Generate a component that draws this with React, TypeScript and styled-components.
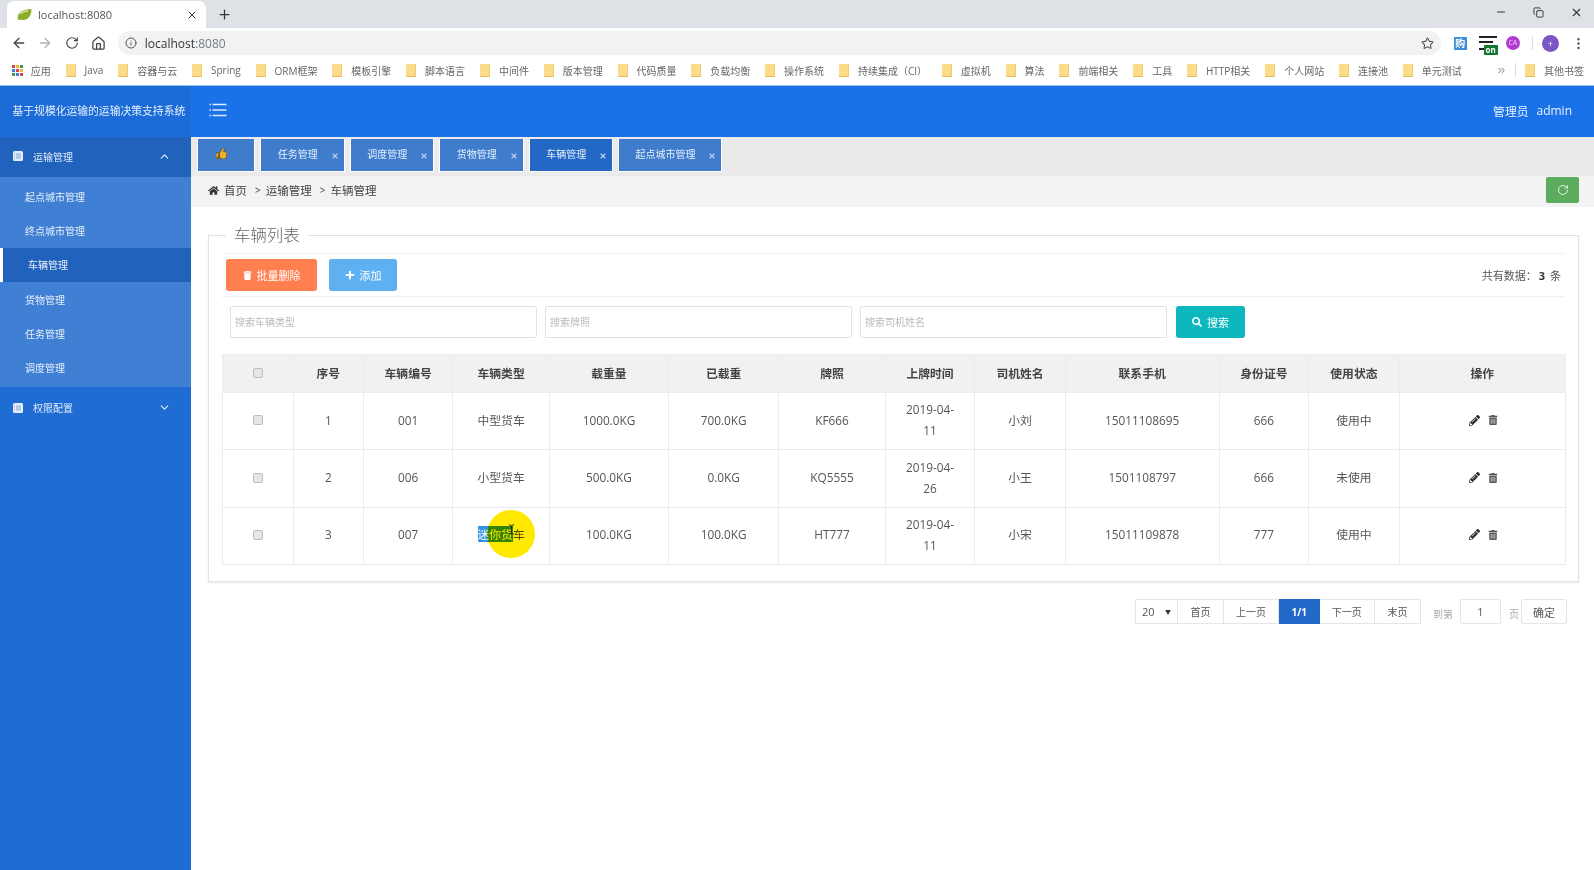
import React from 'react';
import styled, { createGlobalStyle } from 'styled-components';
import {
  ArrowLeft,
  ArrowRight,
  ChevronDown,
  ChevronUp,
  ChevronsRight,
  Copy,
  House,
  Info,
  Minus,
  MoreVertical,
  Plus,
  RotateCw,
  Star,
  TextCursor,
  X,
} from 'lucide-react';
import { FaHome, FaPencilAlt, FaPlus, FaSearch, FaThumbsUp, FaTrash, FaTrashAlt } from 'react-icons/fa';

const FONT = '"Open Sans", "Noto Sans CJK SC", sans-serif';

const GlobalStyle = createGlobalStyle`
  html, body {
    margin: 0;
    height: 100%;
    overflow: hidden;
    background: #fff;
  }
  body {
    font-family: ${FONT};
    color: #444;
  }
  * {
    box-sizing: border-box;
  }
`;

const Page = styled.div`
  width: 1594px;
  height: 870px;
  display: flex;
  flex-direction: column;
  overflow: hidden;
`;

/* browser chrome */
const TabStrip = styled.div`
  height: 28px;
  background: #dee1e6;
  display: flex;
  align-items: flex-end;
  padding-left: 7px;
  flex-shrink: 0;
`;

const BrowserTab = styled.div`
  width: 199px;
  height: 27px;
  background: #fff;
  border-radius: 7px 7px 0 0;
  display: flex;
  align-items: center;
  padding: 0 8px 0 10px;
  font-size: 11px;
  color: #555;
  gap: 6px;

  span {
    flex: 1;
  }
`;

const NewTab = styled.div`
  width: 36px;
  height: 27px;
  display: flex;
  align-items: center;
  justify-content: center;
  color: #333;
`;

const WindowButtons = styled.div`
  margin-left: auto;
  display: flex;
  align-self: flex-start;
  height: 24px;
  align-items: center;
  color: #333;
  padding-right: 11px;
  gap: 26px;
`;

const Toolbar = styled.div`
  height: 30px;
  background: #fff;
  display: flex;
  align-items: center;
  padding: 0 7px 0 5px;
  flex-shrink: 0;
`;

const NavButton = styled.div<{ $faded?: boolean }>`
  width: 27px;
  display: flex;
  justify-content: center;
  color: ${(props) => (props.$faded ? '#aeb1b5' : '#444')};
  margin-right: -0.3px;
`;

const Omnibox = styled.div`
  margin-left: 6px;
  width: 1323px;
  height: 24px;
  background: #f0f2f4;
  border-radius: 12px;
  display: flex;
  align-items: center;
  padding: 0 7px;
  font-size: 12px;
  color: #333;
  gap: 8px;

  i {
    font-style: normal;
    color: #7a7d80;
  }
  svg:last-child {
    margin-left: auto;
  }
`;

const Extensions = styled.div`
  display: flex;
  align-items: center;
  margin-left: 13px;
`;

const GouIcon = styled.div`
  width: 13px;
  height: 13px;
  background: #3a8fd8;
  color: #fff;
  font-size: 10px;
  line-height: 13px;
  text-align: center;
  font-weight: 700;
`;

const ListIcon = styled.div`
  position: relative;
  width: 18px;
  height: 14px;
  margin-left: 12px;
  border-top: 2px solid #222;
  &::before {
    content: '';
    position: absolute;
    left: 0;
    right: 4px;
    top: 3px;
    height: 5px;
    border-top: 2px solid #222;
    border-bottom: 2px solid #222;
  }
`;

const OnBadge = styled.b`
  position: absolute;
  right: -1px;
  bottom: -5px;
  background: #14772f;
  color: #fff;
  font-size: 8px;
  line-height: 10px;
  padding: 0 2px;
  border-radius: 1px;
`;

const CaIcon = styled.div`
  width: 14px;
  height: 14px;
  border-radius: 50%;
  background: #b23cd0;
  color: #f3c6ff;
  font-size: 7px;
  line-height: 14px;
  text-align: center;
  margin-left: 9px;
`;

const ToolbarRule = styled.div`
  width: 1px;
  height: 14px;
  background: #dadce0;
  margin: 0 9px 0 12px;
`;

const Avatar = styled.div`
  width: 17px;
  height: 17px;
  border-radius: 50%;
  background: #7a57c4;
  color: #fff;
  font-size: 9px;
  line-height: 17px;
  text-align: center;
`;

const MenuDots = styled.div`
  margin-left: 12px;
  display: flex;
  color: #555;
`;

const Bookmarks = styled.div`
  height: 28px;
  background: #fff;
  border-bottom: 1px solid #9cc0ee;
  display: flex;
  align-items: center;
  padding: 0 10px 3px 12px;
  font-size: 10px;
  color: #666;
  gap: 14.8px;
  flex-shrink: 0;
`;

const AppsGrid = styled.div`
  width: 11px;
  height: 11px;
  display: grid;
  grid-template-columns: repeat(3, 3px);
  grid-auto-rows: 3px;
  gap: 1px;
  margin-right: -7px;
`;

const AppsDot = styled.i<{ $color: string }>`
  background: ${(props) => props.$color};
`;

const Bookmark = styled.div`
  display: flex;
  align-items: center;
  gap: 9px;
  white-space: nowrap;
`;

const Folder = styled.i`
  width: 10px;
  height: 13px;
  background: #fcdc88;
  border-bottom: 1px solid #e3bd5d;
  border-right: 1px solid #f0cd73;
`;

const MoreBookmarks = styled.div`
  margin-left: auto;
  display: flex;
  align-items: center;
  color: #666;
  border-right: 1px solid #ddd;
  padding-right: 8px;
  height: 14px;
  margin-right: -6px;
`;

/* application */
const Body = styled.div`
  flex: 1;
  display: flex;
  min-height: 0;
`;

const Sidebar = styled.aside`
  width: 191px;
  background: #1f6dd3;
  color: #fff;
  flex-shrink: 0;
`;

const Brand = styled.div`
  height: 51px;
  background: #1b6cd8;
  display: flex;
  align-items: center;
  padding: 0 0 3px 12.5px;
  font-size: 10.8px;
  color: #e4eefb;
  white-space: nowrap;
`;

const MenuGroup = styled.div<{ $open?: boolean }>`
  height: 40px;
  background: ${(props) => (props.$open ? '#2162bd' : 'transparent')};
  display: flex;
  align-items: center;
  padding: ${(props) => (props.$open ? '0 20px 2px 13px' : '2px 20px 0 13px')};
  font-size: 10px;
  color: #dfeafa;
  gap: 10px;

  svg:last-child {
    margin-left: auto;
  }
`;

const SubMenu = styled.div`
  background: #3f7fd4;
  padding: 2.4px 0;
`;

const SubItem = styled.div<{ $active?: boolean }>`
  height: 34.2px;
  display: flex;
  align-items: center;
  font-size: 10px;
  color: #e8f0fb;
  padding-left: 25px;
  background: ${(props) => (props.$active ? '#2162bd' : 'transparent')};
  border-left: ${(props) => (props.$active ? '3px solid #fff' : '0 none')};
`;

const Main = styled.main`
  flex: 1;
  min-width: 0;
  display: flex;
  flex-direction: column;
`;

const Header = styled.header`
  height: 51px;
  background: #1b72e8;
  display: flex;
  align-items: center;
  justify-content: space-between;
  padding: 0 22px 3px 18px;
  color: #e8f2ff;
  font-size: 11.8px;
  flex-shrink: 0;

  div {
    display: flex;
    gap: 8px;
  }
  b {
    font-weight: 400;
    font-size: 12px;
  }
`;

const Hamburger = styled.svg`
  width: 18px;
  height: 14px;
  display: block;
`;

const TabBar = styled.div`
  height: 39px;
  background: #ebebeb;
  display: flex;
  gap: 5px;
  padding: 2px 0 0 6px;
  flex-shrink: 0;
`;

const PageTab = styled.div<{ $width: number; $active?: boolean }>`
  width: ${(props) => props.$width}px;
  height: 33px;
  background: ${(props) => (props.$active ? '#2268c4' : '#3f7ccb')};
  border: 1px solid #fff;
  border-top-width: 0;
  color: #e4effc;
  font-size: 10px;
  display: flex;
  align-items: center;
  justify-content: center;
  position: relative;
  padding-right: 9px;
  padding-bottom: 3px;
`;

const TabClose = styled(X)`
  position: absolute;
  right: 5px;
  top: 13px;
  color: #b8cfee;
`;

const Breadcrumb = styled.div`
  height: 31px;
  background: #f3f3f3;
  display: flex;
  align-items: center;
  padding: 0 15px 0 17px;
  font-size: 11.5px;
  color: #444;
  flex-shrink: 0;

  span {
    margin-left: 5px;
  }
  em {
    font-style: normal;
    margin-left: 8px;
    font-size: 10px;
  }
`;

const CrumbTrail = styled.div`
  display: flex;
  align-items: center;
  padding-bottom: 3px;
`;

const RefreshButton = styled.div`
  width: 33px;
  height: 26.5px;
  margin-left: auto;
  margin-top: -3px;
  background: #5cab5f;
  border-radius: 2px;
  color: #fff;
  display: flex;
  align-items: center;
  justify-content: center;
`;

const ListPanel = styled.fieldset`
  margin: 10px 15px 0 17px;
  padding: 0 13px 16px;
  border: 1px solid #e2e2e2;
  box-shadow: 0 1px 2px rgba(0, 0, 0, 0.08);
  min-width: 0;
`;

const PanelTitle = styled.legend`
  margin-left: 4px;
  padding: 0 8px;
  font-size: 16.4px;
  line-height: 36px;
  font-weight: 300;
  color: #666;
`;

const ActionRow = styled.div`
  height: 44px;
  border-top: 1px solid #f0f0f0;
  border-bottom: 1px solid #f0f0f0;
  display: flex;
  align-items: center;
  padding: 0 4px;
  gap: 12px;
  font-size: 11px;

  p {
    margin: 0 0 0 auto;
    color: #555;
  }
  b {
    margin: 0 2px;
    color: #333;
  }
`;

const ActionButton = styled.div<{ $bg: string; $width: number }>`
  width: ${(props) => props.$width}px;
  height: 32px;
  background: ${(props) => props.$bg};
  border-radius: 3px;
  color: #fff;
  font-size: 11px;
  display: flex;
  align-items: center;
  justify-content: center;
  gap: 5px;
  box-shadow: 0 0 1px rgba(0, 0, 0, 0.15);
`;

const SearchRow = styled.div`
  display: flex;
  gap: 8px;
  padding: 9px 8px 16px;
`;

const SearchInput = styled.input`
  width: 307px;
  height: 32px;
  border: 1px solid #e2e2e2;
  border-radius: 2px;
  padding: 0 4px;
  font-family: ${FONT};
  font-size: 10px;
  outline: none;

  &::placeholder {
    color: #bbb;
  }
`;

const SearchButton = styled.div`
  width: 69px;
  height: 32px;
  margin-left: 1px;
  background: #0cb8bd;
  border-radius: 3px;
  color: #fff;
  font-size: 11px;
  display: flex;
  align-items: center;
  justify-content: center;
  gap: 5px;
`;

const Table = styled.table`
  width: 1344px;
  table-layout: fixed;
  border-collapse: collapse;
  font-size: 11.8px;
  color: #555;
  text-align: center;
`;

const Column = styled.col<{ $width?: number }>`
  width: ${(props) => (props.$width ? `${props.$width}px` : 'auto')};
`;

const HeadCell = styled.th`
  height: 38px;
  background: #f1f1f1;
  border: 1px solid #ececec;
  font-weight: 700;
  color: #444;
  padding: 0 0 2px;
`;

const Cell = styled.td`
  height: 57.4px;
  border: 1px solid #ebebeb;
  padding: 0 15px 2px;
  line-height: 21px;
  position: relative;
`;

const Check = styled.input.attrs({ type: 'checkbox' })`
  appearance: none;
  display: block;
  width: 10px;
  height: 10px;
  margin: 0 auto;
  background: #e6e6e6;
  border: 1px solid #bdbdbd;
  border-radius: 2px;
`;

const Selected = styled.span`
  background: #3390e8;
  color: #fff;
`;

/* the recorder's cursor highlight, it tints whatever is underneath */
const CursorSpot = styled.div`
  position: absolute;
  left: 34px;
  top: 2px;
  width: 48px;
  height: 48px;
  border-radius: 50%;
  background: #ffe900;
  mix-blend-mode: multiply;
  pointer-events: none;
`;

const Beam = styled(TextCursor)`
  position: absolute;
  left: 53px;
  top: 16px;
  color: #222;
`;

const RowActions = styled.div`
  display: flex;
  justify-content: center;
  align-items: center;
  gap: 8px;
  color: #333;
  padding-left: 3px;
`;

const Pager = styled.div`
  display: flex;
  justify-content: flex-end;
  align-items: center;
  margin-top: 17px;
  padding-right: 27px;
  height: 25px;
  font-size: 10px;
  color: #555;
`;

const PagerCell = styled.div<{ $width: number; $active?: boolean }>`
  width: ${(props) => props.$width}px;
  height: 25px;
  display: flex;
  align-items: center;
  justify-content: center;
  border: 1px solid ${(props) => (props.$active ? '#2268c8' : '#e6e6e6')};
  border-left-width: ${(props) => (props.$active ? '1px' : '0')};
  background: ${(props) => (props.$active ? '#2268c8' : '#fff')};
  color: ${(props) => (props.$active ? '#fff' : '#555')};
  font-weight: ${(props) => (props.$active ? 700 : 400)};
`;

const PageSize = styled(PagerCell)`
  border-left-width: 1px;
  justify-content: space-between;
  padding: 0 6px;
  font-size: 11px;

  i {
    font-style: normal;
    font-size: 6px;
    color: #333;
  }
`;

const PagerLabel = styled.span<{ $left: number; $right: number }>`
  color: #aaa;
  margin: 3px ${(props) => props.$right}px 0 ${(props) => props.$left}px;
`;

const PagerInput = styled(PagerCell)`
  border-left-width: 1px;
  border-radius: 2px;
  font-size: 11px;
`;

const bookmarks = ['Java', '容器与云', 'Spring', 'ORM框架', '模板引擎', '脚本语言', '中间件', '版本管理', '代码质量', '负载均衡', '操作系统', '持续集成（CI）', '虚拟机', '算法', '前端相关', '工具', 'HTTP相关', '个人网站', '连接池', '单元测试'];
const appColors = ['#d9453c', '#f2b632', '#3b9c56', '#3f7fe0', '#d9453c', '#f2b632', '#3b9c56', '#3f7fe0', '#d9453c'];
const subMenu = ['起点城市管理', '终点城市管理', '车辆管理', '货物管理', '任务管理', '调度管理'];
const tabs = [
  { label: '任务管理', width: 84.5 },
  { label: '调度管理', width: 84.5 },
  { label: '货物管理', width: 84.5 },
  { label: '车辆管理', width: 84.5, active: true },
  { label: '起点城市管理', width: 104 },
];
const columns = [
  { title: '序号', width: 70.4 },
  { title: '车辆编号', width: 89.3 },
  { title: '车辆类型', width: 96.7 },
  { title: '载重量', width: 119 },
  { title: '已载重', width: 110.3 },
  { title: '牌照', width: 106.5 },
  { title: '上牌时间', width: 89.5 },
  { title: '司机姓名', width: 90.5 },
  { title: '联系手机', width: 153.8 },
  { title: '身份证号', width: 89.7 },
  { title: '使用状态', width: 90.3 },
];
const rows = [
  ['1', '001', '中型货车', '1000.0KG', '700.0KG', 'KF666', '2019-04-11', '小刘', '15011108695', '666', '使用中'],
  ['2', '006', '小型货车', '500.0KG', '0.0KG', 'KQ5555', '2019-04-26', '小王', '1501108797', '666', '未使用'],
  ['3', '007', '迷你货车', '100.0KG', '100.0KG', 'HT777', '2019-04-11', '小宋', '15011109878', '777', '使用中'],
];

function Leaf() {
  return (
    <svg width="15" height="13" viewBox="0 0 15 13">
      <path d="M1 12C-.5 6 4 1 14.500 1c0 7-3.500 11-8.500 11-2 0-3.500-.5-5 0z" fill="#8dae2c" />
      <path d="M3 6c2-2 5-3 8-3" stroke="#d8e89a" strokeWidth="1.4" fill="none" />
    </svg>
  );
}

function ListGlyph() {
  return (
    <svg width="10" height="10" viewBox="0 0 10 10">
      <rect width="10" height="10" rx="1.5" fill="#e8effa" />
      <path d="M3 3h5M3 5h5M3 7h5" stroke="#7ea6dd" strokeWidth="1" />
      <path d="M1.500 1.500v7" stroke="#b9cdea" strokeWidth="1" />
    </svg>
  );
}

export default function App() {
  return (
    <Page>
      <GlobalStyle />
      <TabStrip>
        <BrowserTab>
          <Leaf />
          <span>localhost:8080</span>
          <X size={12} color="#333" />
        </BrowserTab>
        <NewTab>
          <Plus size={15} />
        </NewTab>
        <WindowButtons>
          <Minus size={12} />
          <Copy size={11} />
          <X size={13} />
        </WindowButtons>
      </TabStrip>
      <Toolbar>
        <NavButton>
          <ArrowLeft size={16} />
        </NavButton>
        <NavButton $faded>
          <ArrowRight size={16} />
        </NavButton>
        <NavButton>
          <RotateCw size={14} />
        </NavButton>
        <NavButton>
          <House size={15} />
        </NavButton>
        <Omnibox>
          <Info size={12} color="#555" />
          <div>
            localhost<i>:8080</i>
          </div>
          <Star size={13} color="#555" />
        </Omnibox>
        <Extensions>
          <GouIcon>购</GouIcon>
          <ListIcon>
            <OnBadge>on</OnBadge>
          </ListIcon>
          <CaIcon>CA</CaIcon>
          <ToolbarRule />
          <Avatar>+</Avatar>
          <MenuDots>
            <MoreVertical size={15} />
          </MenuDots>
        </Extensions>
      </Toolbar>
      <Bookmarks>
        <AppsGrid>
          {appColors.map((color, i) => (
            <AppsDot key={i} $color={color} />
          ))}
        </AppsGrid>
        <Bookmark>应用</Bookmark>
        {bookmarks.map((name) => (
          <Bookmark key={name}>
            <Folder />
            {name}
          </Bookmark>
        ))}
        <MoreBookmarks>
          <ChevronsRight size={11} />
        </MoreBookmarks>
        <Bookmark>
          <Folder />
          其他书签
        </Bookmark>
      </Bookmarks>
      <Body>
        <Sidebar>
          <Brand>基于规模化运输的运输决策支持系统</Brand>
          <MenuGroup $open>
            <ListGlyph />
            运输管理
            <ChevronUp size={13} />
          </MenuGroup>
          <SubMenu>
            {subMenu.map((name) => (
              <SubItem key={name} $active={name === '车辆管理'}>
                {name}
              </SubItem>
            ))}
          </SubMenu>
          <MenuGroup>
            <ListGlyph />
            权限配置
            <ChevronDown size={13} />
          </MenuGroup>
        </Sidebar>
        <Main>
          <Header>
            <Hamburger viewBox="0 0 18 14">
              <path d="M3.500 1.500h14M3.500 7h14M3.500 12.500h14" stroke="#dceaff" strokeWidth="1.3" />
              <path d="M.5 1.500h1.500M.5 7h1.500M.5 12.500h1.500" stroke="#dceaff" strokeWidth="1.3" />
            </Hamburger>
            <div>
              管理员 <b>admin</b>
            </div>
          </Header>
          <TabBar>
            <PageTab $width={58}>
              <FaThumbsUp size={11} color="#f0b030" stroke="#5a3a00" strokeWidth={30} />
            </PageTab>
            {tabs.map((tab) => (
              <PageTab key={tab.label} $width={tab.width} $active={tab.active}>
                {tab.label}
                <TabClose size={8} strokeWidth={3.5} />
              </PageTab>
            ))}
          </TabBar>
          <Breadcrumb>
            <CrumbTrail>
              <FaHome size={11} color="#333" />
              <span>首页</span>
              <em>&gt;</em>
              <span>运输管理</span>
              <em>&gt;</em>
              <span>车辆管理</span>
            </CrumbTrail>
            <RefreshButton>
              <RotateCw size={12} strokeWidth={1.6} />
            </RefreshButton>
          </Breadcrumb>
          <ListPanel>
            <PanelTitle>车辆列表</PanelTitle>
            <ActionRow>
              <ActionButton $bg="#ff7f50" $width={91}>
                <FaTrash size={9} />
                批量删除
              </ActionButton>
              <ActionButton $bg="#5eb0f0" $width={68}>
                <FaPlus size={10} />
                添加
              </ActionButton>
              <p>
                共有数据：<b>3</b> 条
              </p>
            </ActionRow>
            <SearchRow>
              <SearchInput placeholder="搜索车辆类型" />
              <SearchInput placeholder="搜索牌照" />
              <SearchInput placeholder="搜索司机姓名" />
              <SearchButton>
                <FaSearch size={10} />
                搜索
              </SearchButton>
            </SearchRow>
            <Table>
              <colgroup>
                <Column $width={70.6} />
                {columns.map((col) => (
                  <Column key={col.title} $width={col.width} />
                ))}
                <Column />
              </colgroup>
              <thead>
                <tr>
                  <HeadCell>
                    <Check />
                  </HeadCell>
                  {columns.map((col) => (
                    <HeadCell key={col.title}>{col.title}</HeadCell>
                  ))}
                  <HeadCell>操作</HeadCell>
                </tr>
              </thead>
              <tbody>
                {rows.map((row) => (
                  <tr key={row[0]}>
                    <Cell>
                      <Check />
                    </Cell>
                    {row.map((value, i) =>
                      value === '迷你货车' ? (
                        <Cell key={i}>
                          <Selected>迷你货</Selected>车
                          <CursorSpot />
                          <Beam size={11} />
                        </Cell>
                      ) : (
                        <Cell key={i}>{value}</Cell>
                      ),
                    )}
                    <Cell>
                      <RowActions>
                        <FaPencilAlt size={11} />
                        <FaTrashAlt size={10} color="#555" />
                      </RowActions>
                    </Cell>
                  </tr>
                ))}
              </tbody>
            </Table>
          </ListPanel>
          <Pager>
            <PageSize $width={43}>
              20 <i>▼</i>
            </PageSize>
            <PagerCell $width={46}>首页</PagerCell>
            <PagerCell $width={55}>上一页</PagerCell>
            <PagerCell $width={40.5} $active>
              1/1
            </PagerCell>
            <PagerCell $width={55.5}>下一页</PagerCell>
            <PagerCell $width={46}>末页</PagerCell>
            <PagerLabel $left={12} $right={7}>
              到第
            </PagerLabel>
            <PagerInput $width={41}>1</PagerInput>
            <PagerLabel $left={8} $right={2}>
              页
            </PagerLabel>
            <PagerInput $width={46}>确定</PagerInput>
          </Pager>
        </Main>
      </Body>
    </Page>
  );
}
